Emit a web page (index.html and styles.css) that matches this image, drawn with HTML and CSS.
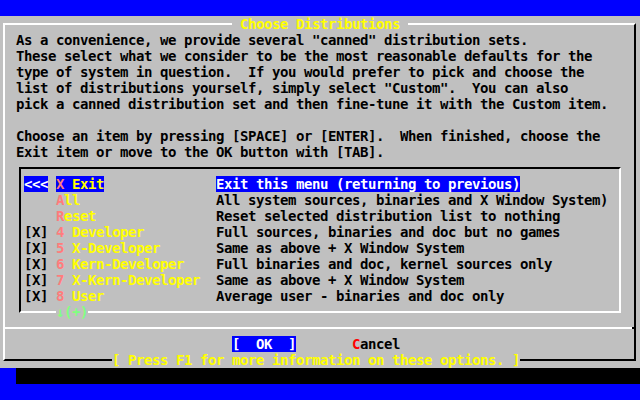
FILE: index.html
```html
<!DOCTYPE html>
<html lang="en">
<head>
<meta charset="utf-8">
<title>Choose Distributions</title>
<link rel="stylesheet" href="styles.css">
</head>
<body>
<div class="screen">
  <div class="backdrop"></div>
  <div class="dialog">
    <div class="frame">
      <h1 class="title"> Choose Distributions </h1>
      <div class="intro">
        <p>As a convenience, we provide several "canned" distribution sets.</p>
        <p>These select what we consider to be the most reasonable defaults for the</p>
        <p>type of system in question.  If you would prefer to pick and choose the</p>
        <p>list of distributions yourself, simply select "Custom".  You can also</p>
        <p>pick a canned distribution set and then fine-tune it with the Custom item.</p>
        <p class="blank"></p>
        <p>Choose an item by pressing [SPACE] or [ENTER].  When finished, choose the</p>
        <p>Exit item or move to the OK button with [TAB].</p>
      </div>
      <div class="menu">
        <ul class="items">
          <li class="item current">
            <span class="check"><span class="mark">&lt;&lt;&lt;</span></span>
            <span class="name"><span class="label"><span class="hot">X</span> Exit</span></span>
            <span class="desc"><span class="text">Exit this menu (returning to previous)</span></span>
          </li>
          <li class="item">
            <span class="check"></span>
            <span class="name"><span class="label"><span class="hot">A</span>ll</span></span>
            <span class="desc"><span class="text">All system sources, binaries and X Window System)</span></span>
          </li>
          <li class="item">
            <span class="check"></span>
            <span class="name"><span class="label"><span class="hot">R</span>eset</span></span>
            <span class="desc"><span class="text">Reset selected distribution list to nothing</span></span>
          </li>
          <li class="item">
            <span class="check"><span class="mark">[X]</span></span>
            <span class="name"><span class="label"><span class="hot">4</span> Developer</span></span>
            <span class="desc"><span class="text">Full sources, binaries and doc but no games</span></span>
          </li>
          <li class="item">
            <span class="check"><span class="mark">[X]</span></span>
            <span class="name"><span class="label"><span class="hot">5</span> X-Developer</span></span>
            <span class="desc"><span class="text">Same as above + X Window System</span></span>
          </li>
          <li class="item">
            <span class="check"><span class="mark">[X]</span></span>
            <span class="name"><span class="label"><span class="hot">6</span> Kern-Developer</span></span>
            <span class="desc"><span class="text">Full binaries and doc, kernel sources only</span></span>
          </li>
          <li class="item">
            <span class="check"><span class="mark">[X]</span></span>
            <span class="name"><span class="label"><span class="hot">7</span> X-Kern-Developer</span></span>
            <span class="desc"><span class="text">Same as above + X Window System</span></span>
          </li>
          <li class="item">
            <span class="check"><span class="mark">[X]</span></span>
            <span class="name"><span class="label"><span class="hot">8</span> User</span></span>
            <span class="desc"><span class="text">Average user - binaries and doc only</span></span>
          </li>
        </ul>
        <span class="more">↓(+)</span>
      </div>
      <div class="separator"></div>
      <div class="buttons">
        <span class="btn focused">[  OK  ]</span>
        <span class="btn"><span class="key">C</span>ancel</span>
      </div>
      <div class="hint">[ Press F1 for more information on these options. ]</div>
    </div>
  </div>
  <div class="shadow"></div>
</div>
</body>
</html>
```

FILE: styles.css
```css
/* 80x25 text console: every cell is 8px wide and 16px tall */
* {
  margin: 0;
  padding: 0;
  box-sizing: border-box;
}

html,
body {
  background: #0000ff;
}

.screen {
  width: 640px;
  height: 400px;
  overflow: hidden;
  background: #0000ff;
  color: #000;
  font-family: "DejaVu Sans Mono", "Liberation Mono", monospace;
  font-weight: bold;
  font-size: 14px;
  letter-spacing: -0.43px;
  line-height: 16px;
}

/* text runs keep their doubled spaces, like console output */
.intro p,
.title,
.label,
.mark,
.text,
.btn,
.hint,
.more {
  white-space: pre;
}

.backdrop {
  height: 16px;
}

/* grey dialog window, rows 1..22 */
.dialog {
  height: 352px;
  background: #c0c0c0;
  padding: 7px 4px 7px 3px;
}

.frame {
  position: relative;
  height: 338px;
  border: 2px solid;
  border-color: #fff #000 #000 #fff;
}

.title {
  position: absolute;
  left: 227px;
  top: -9px;
  font: inherit;
  color: #ffff00;
  background: #c0c0c0;
}

.intro {
  padding: 7px 0 0 11px;
}

.intro p {
  height: 16px;
}

/* inset list box */
.menu {
  position: relative;
  width: 602px;
  margin: 7px 0 0 14px;
  border: 2px solid;
  border-color: #000 #fff #fff #000;
  padding: 7px 0 7px 3px;
}

.items {
  list-style: none;
}

.item {
  display: flex;
  height: 16px;
}

.check {
  width: 32px;
  flex: none;
}

.name {
  width: 160px;
  flex: none;
  color: #ffff00;
}

.hot {
  color: #ff7c7c;
}

.current .mark,
.current .label,
.current .text {
  background: #0000ff;
  color: #fff;
}

.current .label {
  color: #ffff00;
}

.current .hot {
  color: #ff7c7c;
}

.more {
  position: absolute;
  left: 35px;
  bottom: -9px;
  color: #80ff80;
  background: #c0c0c0;
}

.separator {
  margin-top: 14px;
  height: 2px;
  background: linear-gradient(to right, #fff calc(100% - 2px), #000 0);
}

.buttons {
  display: flex;
  gap: 56px;
  height: 16px;
  margin-top: 7px;
  padding-left: 227px;
}

.btn.focused {
  background: #0000ff;
  color: #fff;
}

.key {
  color: #ff0000;
}

.hint {
  position: absolute;
  left: 107px;
  bottom: -9px;
  color: #ffff00;
  background: #c0c0c0;
}

/* drop shadow under the dialog */
.shadow {
  height: 16px;
  margin-left: 16px;
  background: #000;
}
```
